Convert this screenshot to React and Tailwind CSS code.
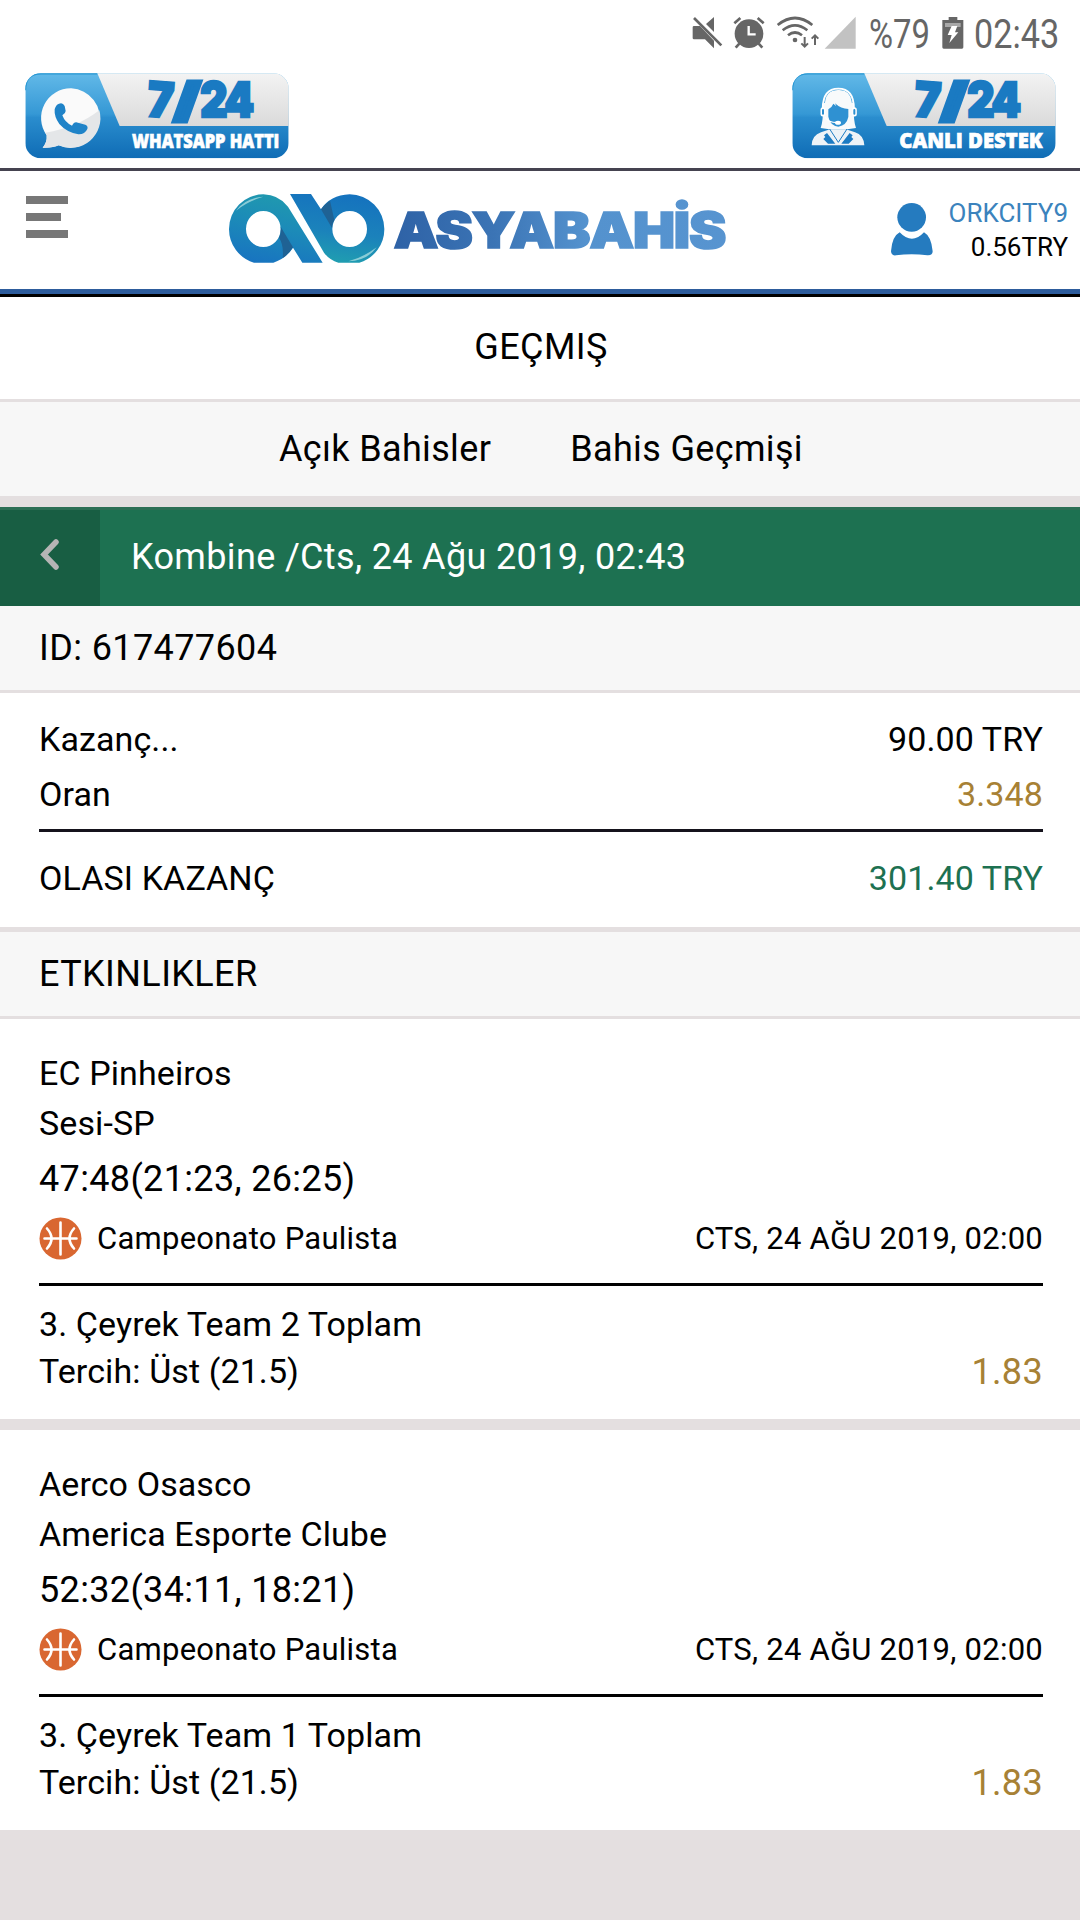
import React from 'react';

const EVENTS = [
  {
    home: 'EC Pinheiros',
    away: 'Sesi-SP',
    score: '47:48(21:23, 26:25)',
    league: 'Campeonato Paulista',
    date: 'CTS, 24 AĞU 2019, 02:00',
    market: '3. Çeyrek Team 2 Toplam',
    pick: 'Tercih: Üst (21.5)',
    odds: '1.83',
  },
  {
    home: 'Aerco Osasco',
    away: 'America Esporte Clube',
    score: '52:32(34:11, 18:21)',
    league: 'Campeonato Paulista',
    date: 'CTS, 24 AĞU 2019, 02:00',
    market: '3. Çeyrek Team 1 Toplam',
    pick: 'Tercih: Üst (21.5)',
    odds: '1.83',
  },
];

const StatusBar = () => (
  <div className="flex h-[73px] items-start pl-[692px] pt-[16px] text-[#666666]">
    <svg width="165" height="34" viewBox="36 48 495 102" fill="currentColor" className="shrink-0">
      {/* muted speaker */}
      <path d="M42 78h18l42 44v23l-27-27H42q-4 0-4-4V82q0-4 4-4zM78 72l24-21v45z" />
      <path d="M42 54l82 82" stroke="currentColor" strokeWidth="8" />
      {/* alarm */}
      <circle cx="207" cy="101" r="43" />
      <path d="M163 70l18-16M251 70l-18-16M178 131l-11 12M236 131l11 12" stroke="currentColor" strokeWidth="8" />
      <path d="M206 78v25h21" fill="none" stroke="#fff" strokeWidth="7" />
      {/* wifi */}
      <g fill="none" stroke="currentColor" strokeWidth="8">
        <path d="M293 75q52-42 104 0M308 91q37-30 74 0M324 106q21-17 42 0" />
        <path d="M374 111v28M364 130l10 10 10-10M405 135v-28M395 116l10-10 10 10" strokeWidth="6" />
      </g>
      <circle cx="345" cy="120" r="7" />
      {/* signal */}
      <path d="M434 146L527 50v96z" fill="#c2c2c2" />
    </svg>
    <span className="ml-[12px] w-[60px] pt-px font-[Roboto] text-[40px] leading-[36px] whitespace-nowrap">
      <span className="inline-block origin-left scale-x-[0.82]">%79</span>
    </span>
    <svg width="22" height="34" viewBox="786 48 64 102" className="ml-[13px] shrink-0">
      <path d="M805 51h26v9h18v82q0 4-4 4h-55q-4 0-4-4V60h19z" fill="#666666" />
      <path d="M794 69h47v12h-47z" fill="#a8a8a8" />
      <path d="M814 78h17l-7 19h10l-27 32 7-24h-12z" fill="#fff" />
    </svg>
    <span className="ml-[10px] pt-px font-[Roboto] text-[40px] leading-[36px] whitespace-nowrap">
      <span className="inline-block origin-left scale-x-[0.855]">02:43</span>
    </span>
  </div>
);

const WhatsappIcon = () => (
  <g>
    <path d="M184 84a89 89 0 1 1-38 171q-16 8-48 7q14-16 12-37A89 89 0 0 1 184 84z" fill="#fafafa" />
    <path d="M268 150a89 89 0 0 1-122 105q-16 8-48 7q14-16 12-37l-4-8q95-15 162-67z" fill="#e4e6e8" />
    <path
      d="M147 130q11-5 17 7l3 15q0 7-10 13q8 22 29 31q7-14 18-9l22 6q9 4 6 13q-8 17-27 16q-35-6-57-31q-16-22-14-44q3-13 13-17z"
      fill="#1f83c8"
    />
  </g>
);

const SupportIcon = () => (
  <g>
    <path d="M104 255q1-30 28-39l27-9h48l27 9q26 8 28 39z" fill="#eef3f7" />
    <path d="M131 203q8-22 7-70q3-43 46-44t46 44q-1 48 7 70l-26 4h-54z" fill="#f8fafb" />
    {/* face */}
    <path d="M154 147q12-8 15-17l9 8-4-9q18 17 40 17v24q-5 25-30 29q-25-4-30-30z" fill="#2f91d2" />
    {/* lapels */}
    <path d="M150 218l25 32h-22l-14-14 6-6-4-5zM218 218l-25 32h22l14-14-6-6 4-5z" fill="#1c7bc3" />
    <path d="M158 206l26 40 26-40" fill="none" stroke="#1c7bc3" strokeWidth="3" />
    {/* headset */}
    <path d="M142 128q4-41 42-41t42 41" fill="none" stroke="#5fb1e2" strokeWidth="3" />
    <path d="M137 145q0-60 47-60t47 60" fill="none" stroke="#fff" strokeWidth="5" />
    <path d="M138 148v13M232 148v13" stroke="#fff" strokeWidth="15" strokeLinecap="round" />
    <path d="M138 149v11M232 149v11" stroke="#2c8fd0" strokeWidth="6" strokeLinecap="round" />
    <path d="M144 170q10 17 36 17" fill="none" stroke="#fff" strokeWidth="4" />
    <ellipse cx="183" cy="187" rx="9" ry="6" fill="#fff" />
  </g>
);

const ContactBadge = ({ id, label, labelX, labelWidth, labelSize, children }) => (
  <svg width="264" height="86" viewBox="45 38 792 258" className="overflow-visible">
    <defs>
      <linearGradient id={`${id}-blue`} x1="0" y1="0" x2="0" y2="1">
        <stop offset="0" stopColor="#62b9e8" />
        <stop offset="0.48" stopColor="#3598d5" />
        <stop offset="0.52" stopColor="#2a8dce" />
        <stop offset="1" stopColor="#0f6cb5" />
      </linearGradient>
      <linearGradient id={`${id}-gray`} x1="0" y1="0" x2="0" y2="1">
        <stop offset="0" stopColor="#f3f3f3" />
        <stop offset="1" stopColor="#dadada" />
      </linearGradient>
      <clipPath id={`${id}-clip`}>
        <rect x="46" y="39" width="790" height="255" rx="46" />
      </clipPath>
    </defs>
    <g clipPath={`url(#${id}-clip)`}>
      <rect x="46" y="39" width="790" height="255" fill={`url(#${id}-blue)`} />
      <path d="M262 39h575v158H329z" fill={`url(#${id}-gray)`} />
      <path d="M46 90q0-50 46-50h170" fill="none" stroke="#2495d2" strokeWidth="5" />
    </g>
    {children}
    <g
      fill="#1a7ac2"
      stroke="#1a7ac2"
      strokeWidth="8"
      fontFamily="Inter, sans-serif"
      fontWeight="900"
      fontSize="144"
    >
      <text x="413" y="170" textLength="78" lengthAdjust="spacingAndGlyphs" transform="rotate(4 450 120)">7</text>
      <text x="494" y="168" fontSize="134" strokeWidth="15" textLength="74" lengthAdjust="spacingAndGlyphs">/</text>
      <text x="571" y="171" letterSpacing="-8" textLength="154" lengthAdjust="spacingAndGlyphs">24</text>
    </g>
    <text
      x={labelX}
      y={262}
      textLength={labelWidth}
      lengthAdjust="spacingAndGlyphs"
      fill="#fff"
      stroke="#fff"
      strokeWidth="2"
      fontFamily="'Open Sans', sans-serif"
      fontWeight="800"
      fontSize={labelSize}
    >
      {label}
    </text>
  </svg>
);

const Logo = () => (
  <svg width="510" height="80" viewBox="57 39 1530 240">
    <defs>
      <linearGradient id="ringLeft" x1="0.6" y1="0" x2="0.3" y2="1">
        <stop offset="0" stopColor="#209aae" />
        <stop offset="0.45" stopColor="#1c8bb8" />
        <stop offset="1" stopColor="#1874c0" />
      </linearGradient>
      <linearGradient id="ringRight" x1="0.6" y1="0" x2="0.4" y2="1">
        <stop offset="0" stopColor="#1572be" />
        <stop offset="0.55" stopColor="#1b82bb" />
        <stop offset="1" stopColor="#209fb0" />
      </linearGradient>
      <linearGradient id="word" x1="0" y1="0" x2="1" y2="0">
        <stop offset="0" stopColor="#2e62a6" />
        <stop offset="0.3" stopColor="#3b74b5" />
        <stop offset="0.58" stopColor="#5492ce" />
        <stop offset="1" stopColor="#5794d0" />
      </linearGradient>
    </defs>
    <path
      fillRule="evenodd"
      d="M160 73Q206 74 234 110L338 278H277L249 233Q228 266 190 278H132A105 105 0 0 1 57 177A103 104 0 0 1 160 73zM160 123A52 54 0 1 0 160 231A52 54 0 1 0 160 123z"
      fill="url(#ringLeft)"
    />
    <path d="M212 170L249 232Q235 254 218 264Q222 225 207 203Q214 188 212 170z" fill="#1f6294" />
    <path
      fillRule="evenodd"
      d="M240 72H303L333 118Q360 76 419 73A104 104 0 0 1 523 177A105 105 0 0 1 448 278H385Q358 270 342 248zM419 123A52 54 0 1 0 419 231A52 54 0 1 0 419 123z"
      fill="url(#ringRight)"
    />
    <path d="M333 118Q344 102 360 92L373 150Q366 160 366 174z" fill="#1f6294" />
    <path d="M78 122Q105 84 160 80Q112 95 78 122z" fill="#b8e4e6" opacity="0.7" />
    <path d="M500 232Q472 272 415 274Q460 262 500 232z" fill="#b8e4e6" opacity="0.7" />
    <text
      x="551"
      y="234"
      letterSpacing="-3"
      textLength="995"
      lengthAdjust="spacingAndGlyphs"
      fill="url(#word)"
      stroke="url(#word)"
      strokeWidth="5"
      fontFamily="Inter, sans-serif"
      fontWeight="900"
      fontSize="148"
    >
      ASYABAHİS
    </text>
  </svg>
);

const Header = () => (
  <header className="flex h-[126px] items-start border-b-[3px] border-black bg-white">
    <div className="flex h-[123px] w-full items-start border-b-[5px] border-[#2d5c9c] pl-[26px] pr-[12px]">
      <div className="flex flex-col gap-[9px] pt-[25px]">
        <span className="h-[8px] w-[42px] bg-[#777777]" />
        <span className="h-[8px] w-[35px] bg-[#777777]" />
        <span className="h-[8px] w-[42px] bg-[#777777]" />
      </div>
      <div className="ml-[161px] pt-[12px]">
        <Logo />
      </div>
      <div className="ml-auto flex">
        <svg width="42" height="53" viewBox="93 70 126 159" fill="#257bbf" className="mt-[32px] shrink-0">
          <circle cx="155" cy="113" r="43" />
          <path d="M119 158q37 39 73 0q22 12 26 57q0 13-16 12q-47-7-94 0q-14 2-15-12q3-45 26-57z" />
        </svg>
        <div className="w-[135px] pt-[25px] text-right text-[26px] leading-[34px]">
          <div className="text-[#3b83bd]">ORKCITY9</div>
          <div>0.56TRY</div>
        </div>
      </div>
    </div>
  </header>
);

const BallIcon = () => (
  <svg width="43" height="43" viewBox="0 0 43 43" className="shrink-0">
    <circle cx="21.5" cy="21.5" r="21" fill="#d96731" />
    <g fill="none" stroke="#fff" strokeWidth="2.6" strokeLinecap="round">
      <path d="M21.5 5.500v32M5.500 21.5h32M8 11.500q9 10 0 20M35 11.500q-9 10 0 20" />
    </g>
  </svg>
);

const EventCard = ({ event }) => (
  <div className="h-[400px] bg-white pl-[39px] pr-[37px] pt-[29px]">
    <div className="text-[34px] leading-[50px] tracking-[0.1px]">{event.home}</div>
    <div className="text-[34px] leading-[50px] tracking-[0.1px]">{event.away}</div>
    <div className="text-[36px] leading-[63px] tracking-[0.35px]">{event.score}</div>
    <div className="flex h-[75px] items-start border-b-[3px] border-black pt-[5px] text-[31px] leading-[46px] tracking-[0.25px]">
      <div className="pt-[1px]"><BallIcon /></div>
      <span className="ml-[15px]">{event.league}</span>
      <span className="ml-auto">{event.date}</span>
    </div>
    <div className="pt-[15px] text-[34px] leading-[47px] tracking-[0.1px]">
      <div>{event.market}</div>
      <div className="flex justify-between">
        <span>{event.pick}</span>
        <span className="pt-px text-[36px] tracking-[0.35px] text-[#a78135]">{event.odds}</span>
      </div>
    </div>
  </div>
);

const App = () => (
  <div className="h-[1920px] w-[1080px] overflow-hidden bg-[#e4dfe0] font-[Roboto,sans-serif] text-black">
    <div className="h-[171px] border-b-[3px] border-[#454350] bg-white">
      <StatusBar />
      <div className="flex justify-between pl-[25px] pr-[24px]">
        <ContactBadge id="wa" label="WHATSAPP HATTI" labelX={366} labelWidth={442} labelSize={56}>
          <WhatsappIcon />
        </ContactBadge>
        <ContactBadge id="live" label="CANLI DESTEK" labelX={367} labelWidth={430} labelSize={62}>
          <SupportIcon />
        </ContactBadge>
      </div>
    </div>
    <Header />

    <div className="h-[105px] border-b-[3px] border-[#e4dfe0] bg-white pl-[2px] text-center text-[36px] leading-[100px] tracking-[0.4px]">
      GEÇMIŞ
    </div>
    <div className="flex h-[94px] justify-center gap-[79px] bg-[#f7f7f7] pl-[2px] text-[36px] leading-[94px] tracking-[0.35px]">
      <span>Açık Bahisler</span>
      <span>Bahis Geçmişi</span>
    </div>

    <div className="mt-[11px] flex h-[99px] border-t-[3px] border-[#2c6f55] bg-[#1d7151] text-[36px] leading-[94px] tracking-[0.35px] text-white">
      <div className="flex w-[100px] justify-center bg-[#185e43] pt-[28px]">
        <svg width="20" height="33" viewBox="0 0 20 33" fill="none" stroke="#b5b5b5" strokeWidth="5.500" strokeLinecap="round">
          <path d="M16 4L4 16.500l12 12.500" />
        </svg>
      </div>
      <span className="pl-[31px]">Kombine /Cts, 24 Ağu 2019, 02:43</span>
    </div>

    <div className="h-[87px] border-b-[3px] border-[#e4dfe0] bg-[#f7f7f7] pl-[39px] text-[36px] leading-[84px] tracking-[0.4px]">
      ID: 617477604
    </div>
    <div className="h-[234px] bg-white pl-[39px] pr-[37px] pt-[19px] text-[34px] leading-[55px] tracking-[0.1px]">
      <div className="flex justify-between">
        <span>Kazanç...</span>
        <span>90.00 TRY</span>
      </div>
      <div className="flex h-[65px] justify-between border-b-[3px] border-[#15131c]">
        <span>Oran</span>
        <span className="text-[#a78135]">3.348</span>
      </div>
      <div className="flex justify-between pt-[19px]">
        <span>OLASI KAZANÇ</span>
        <span className="text-[#1d7151]">301.40 TRY</span>
      </div>
    </div>

    <div className="mt-[5px] h-[87px] border-b-[3px] border-[#e4dfe0] bg-[#f7f7f7] pl-[39px] text-[36px] leading-[84px] tracking-[0.4px]">
      ETKINLIKLER
    </div>
    <div className="flex flex-col gap-[11px]">
      {EVENTS.map((event) => (
        <EventCard key={event.home} event={event} />
      ))}
    </div>
  </div>
);

export default App;
